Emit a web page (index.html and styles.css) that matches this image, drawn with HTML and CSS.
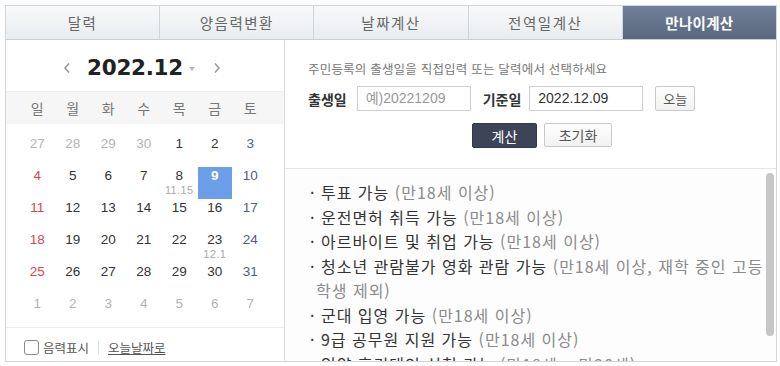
FILE: index.html
```html
<!DOCTYPE html>
<html lang="ko">
<head>
<meta charset="utf-8">
<title>만나이계산</title>
<link rel="stylesheet" href="styles.css">
</head>
<body>
<div class="wrap">
  <div class="tabs">
    <div class="tab">달력</div>
    <div class="tab">양음력변환</div>
    <div class="tab">날짜계산</div>
    <div class="tab">전역일계산</div>
    <div class="tab active">만나이계산</div>
  </div>
  <div class="main">
    <div class="cal">
      <div class="cal-head">
        <svg class="nav" width="8" height="12" viewBox="0 0 8 12"><polyline points="6,1.5 2,6 6,10.5" fill="none" stroke="#999" stroke-width="1.6"/></svg>
        <span class="ym">2022.12</span>
        <svg class="caret" width="6" height="4" viewBox="0 0 6 4"><polygon points="0,0 6,0 3,4" fill="#b8b8b8"/></svg>
        <svg class="nav next" width="8" height="12" viewBox="0 0 8 12"><polyline points="2,1.5 6,6 2,10.5" fill="none" stroke="#999" stroke-width="1.6"/></svg>
      </div>
      <div class="wk">
        <span>일</span><span>월</span><span>화</span><span>수</span><span>목</span><span>금</span><span>토</span>
      </div>
      <div class="days">
        <div class="d other"><span class="n">27</span></div>
        <div class="d other"><span class="n">28</span></div>
        <div class="d other"><span class="n">29</span></div>
        <div class="d other"><span class="n">30</span></div>
        <div class="d"><span class="n">1</span></div>
        <div class="d"><span class="n">2</span></div>
        <div class="d sat"><span class="n">3</span></div>

        <div class="d sun"><span class="n">4</span></div>
        <div class="d"><span class="n">5</span></div>
        <div class="d"><span class="n">6</span></div>
        <div class="d"><span class="n">7</span></div>
        <div class="d"><span class="n">8</span><span class="lunar">11.15</span></div>
        <div class="d sel"><span class="n">9</span></div>
        <div class="d sat"><span class="n">10</span></div>

        <div class="d sun"><span class="n">11</span></div>
        <div class="d"><span class="n">12</span></div>
        <div class="d"><span class="n">13</span></div>
        <div class="d"><span class="n">14</span></div>
        <div class="d"><span class="n">15</span></div>
        <div class="d"><span class="n">16</span></div>
        <div class="d sat"><span class="n">17</span></div>

        <div class="d sun"><span class="n">18</span></div>
        <div class="d"><span class="n">19</span></div>
        <div class="d"><span class="n">20</span></div>
        <div class="d"><span class="n">21</span></div>
        <div class="d"><span class="n">22</span></div>
        <div class="d"><span class="n">23</span><span class="lunar">12.1</span></div>
        <div class="d sat"><span class="n">24</span></div>

        <div class="d sun"><span class="n">25</span></div>
        <div class="d"><span class="n">26</span></div>
        <div class="d"><span class="n">27</span></div>
        <div class="d"><span class="n">28</span></div>
        <div class="d"><span class="n">29</span></div>
        <div class="d"><span class="n">30</span></div>
        <div class="d sat"><span class="n">31</span></div>

        <div class="d other"><span class="n">1</span></div>
        <div class="d other"><span class="n">2</span></div>
        <div class="d other"><span class="n">3</span></div>
        <div class="d other"><span class="n">4</span></div>
        <div class="d other"><span class="n">5</span></div>
        <div class="d other"><span class="n">6</span></div>
        <div class="d other"><span class="n">7</span></div>
      </div>
      <div class="cal-foot">
        <span class="chk"></span>
        <span class="lbl">음력표시</span>
        <span class="bar"></span>
        <span class="today">오늘날짜로</span>
      </div>
    </div>
    <div class="right">
      <div class="form">
        <p class="hint">주민등록의 출생일을 직접입력 또는 달력에서 선택하세요</p>
        <div class="row">
          <span class="label">출생일</span>
          <span class="input ph">예)20221209</span>
          <span class="label l2">기준일</span>
          <span class="input">2022.12.09</span>
          <span class="btn small">오늘</span>
        </div>
        <div class="btns">
          <span class="btn dark">계산</span>
          <span class="btn reset">초기화</span>
        </div>
      </div>
      <div class="result">
        <ul class="list">
          <li>· 투표 가능 <em>(만18세 이상)</em></li>
          <li>· 운전면허 취득 가능 <em>(만18세 이상)</em></li>
          <li>· 아르바이트 및 취업 가능 <em>(만18세 이상)</em></li>
          <li>· 청소년 관람불가 영화 관람 가능 <em>(만18세 이상, 재학 중인 고등학생 제외)</em></li>
          <li>· 군대 입영 가능 <em>(만18세 이상)</em></li>
          <li>· 9급 공무원 지원 가능 <em>(만18세 이상)</em></li>
          <li>· 입양 후견대인 신청 가능 <em>(만18세 ~ 만20세)</em></li>
        </ul>
        <div class="thumb"></div>
      </div>
    </div>
  </div>
</div>
</body>
</html>
```

FILE: styles.css
```css
* { box-sizing: border-box; }
html, body { margin: 0; padding: 0; background: #fff; }
body {
  font-family: "Noto Sans CJK KR", "Liberation Sans", sans-serif;
  color: #333;
}
.wrap {
  margin: 5px 0 0 5px;
  width: 772px;
  border: 1px solid #d3d7dc;
}
.tabs {
  display: flex;
  height: 34px;
  border-bottom: 1px solid #c9ced4;
}
.tab {
  flex: 1;
  display: flex;
  align-items: center;
  justify-content: center;
  font-size: 14.5px;
  color: #666;
  background: linear-gradient(#f8f9fa, #e9ecef);
  border-right: 1px solid #d0d5da;
  letter-spacing: 1.5px;
}
.tab.active {
  border-right: 0;
  background: linear-gradient(#72819a, #58677d);
  color: #fff;
  font-weight: bold;
  letter-spacing: 0.3px;
}
.main {
  display: flex;
  height: 321px;
}
/* calendar */
.cal {
  width: 279px;
  border-right: 1px solid #dcdcdc;
  display: flex;
  flex-direction: column;
}
.cal-head {
  height: 52px;
  border-bottom: 1px solid #eee;
  display: flex;
  align-items: center;
  justify-content: center;
  padding: 4px 6px 0 0;
}
.nav { margin-right: 16px; }
.nav.next { margin: 0 0 0 18px; }
.ym {
  font-family: "DejaVu Sans", sans-serif;
  font-weight: bold;
  font-size: 21.5px;
  color: #222;
  letter-spacing: -0.3px;
}
.caret { margin-left: 6px; margin-top: 2px; }
.wk {
  display: grid;
  grid-template-columns: repeat(7, 34.5px);
  column-gap: 1px;
  padding-left: 14px;
  height: 32px;
  background: #f6f6f6;
  font-size: 14px;
  color: #777;
}
.wk span { text-align: center; line-height: 32px; }
.days {
  display: grid;
  grid-template-columns: repeat(7, 34.5px);
  grid-auto-rows: 32px;
  column-gap: 1px;
  padding-left: 14px;
  margin-top: 11px;
  font-family: "Liberation Sans", sans-serif;
}
.d {
  display: flex;
  flex-direction: column;
  align-items: center;
  color: #333;
}
.d .n { font-size: 13.5px; line-height: 18px; }
.d .lunar { font-size: 11px; line-height: 10px; color: #a9a9a9; letter-spacing: 0.4px; }
.d.sun { color: #d0494e; }
.d.sat { color: #515d80; }
.d.other { color: #b3b3b3; }
.d.sel { background: #6c9eea; color: #fff; font-weight: bold; }
.cal-foot {
  margin-top: auto;
  height: 34px;
  border-top: 1px solid #ececec;
  padding: 6px 0 0 18px;
  display: flex;
  align-items: center;
  font-size: 12.5px;
  color: #555;
}
.chk {
  width: 15px;
  height: 15px;
  border: 1px solid #8a8a8a;
  border-radius: 3px;
  background: #fff;
  margin-right: 4px;
}
.bar { width: 1px; height: 13px; background: #ddd; margin: 0 9px; }
.today { text-decoration: underline; color: #555; }
/* right */
.right {
  flex: 1;
  display: flex;
  flex-direction: column;
}
.form {
  height: 129px;
  border-bottom: 1px solid #e6e6e6;
  padding: 20px 0 0 23px;
}
.hint {
  margin: 0;
  font-size: 12.5px;
  line-height: 18px;
  color: #777;
  letter-spacing: 0.2px;
}
.row {
  display: flex;
  align-items: center;
  margin-top: 8px;
  height: 25px;
}
.label { font-weight: bold; font-size: 14px; color: #333; margin-right: 10px; }
.label.l2 { margin-left: 12px; margin-right: 8px; }
.input {
  width: 114px;
  height: 25px;
  border: 1px solid #cfcfcf;
  padding-left: 8px;
  font-family: "Liberation Sans", "Noto Sans CJK KR", sans-serif;
  font-size: 14px;
  line-height: 23px;
  color: #333;
}
.input.ph { color: #999; }
.btn {
  display: inline-flex;
  align-items: center;
  justify-content: center;
  height: 25px;
  border: 1px solid #c9c9c9;
  border-radius: 2px;
  background: linear-gradient(#fff, #f1f1f1);
  font-size: 13px;
  color: #555;
}
.btn.small { width: 40px; margin-left: 12px; }
.btns {
  display: flex;
  justify-content: center;
  gap: 7px;
  margin-top: 12px;
}
.btn.dark {
  width: 65px;
  background: #3d4457;
  border-color: #323849;
  color: #fff;
  font-size: 14px;
}
.btn.reset { width: 68px; height: 24px; font-size: 14px; color: #555; }
.result {
  position: relative;
  flex: 1;
  overflow: hidden;
  background: #fdfdfd;
}
.list {
  list-style: none;
  margin: 0;
  padding: 11px 12px 0 0;
  font-size: 16px;
  line-height: 24.5px;
  letter-spacing: 1px;
  word-break: break-all;
  color: #333;
}
.list li { padding-left: 31px; text-indent: -6px; }
.list em { font-style: normal; color: #8a8a8a; }
.thumb {
  position: absolute;
  right: 2px;
  top: 4px;
  width: 8px;
  height: 163px;
  border-radius: 4px;
  background: #c6c6c6;
}
```
